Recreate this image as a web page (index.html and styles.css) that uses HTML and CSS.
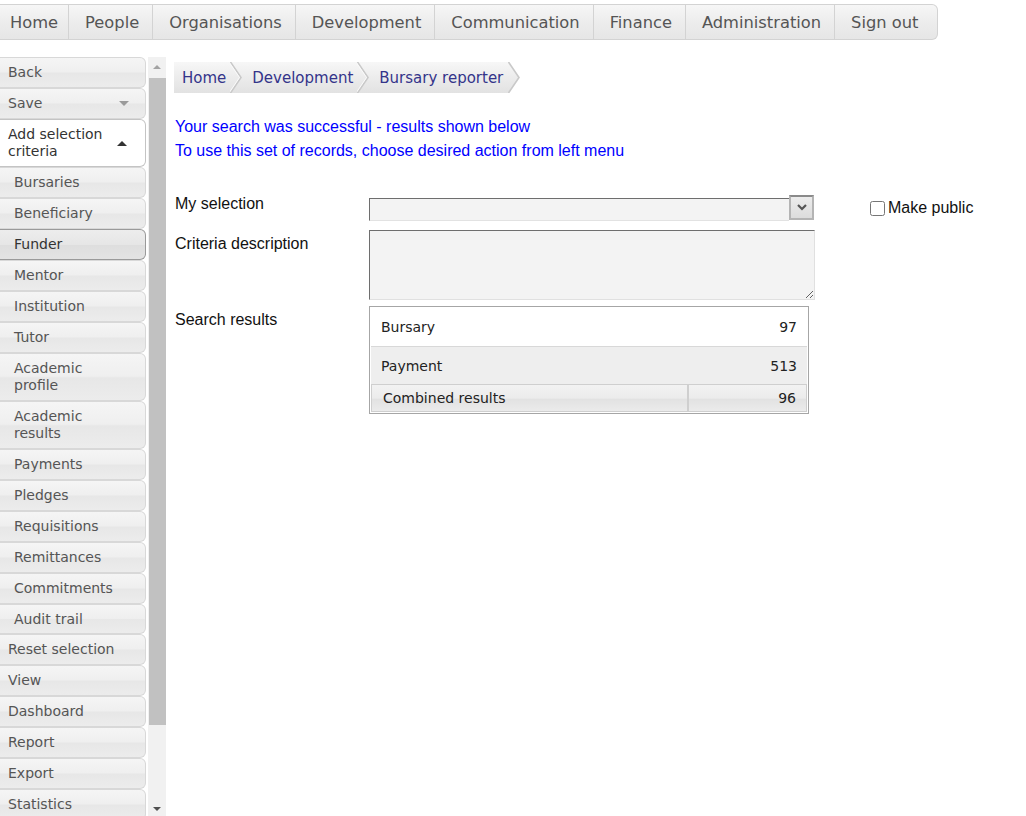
FILE: index.html
```html
<!DOCTYPE html>
<html lang="en">
<head>
<meta charset="utf-8">
<title>Bursary reporter</title>
<link rel="stylesheet" href="styles.css">
</head>
<body>
<nav class="topnav">
  <a class="topnav-item first">Home</a>
  <a class="topnav-item">People</a>
  <a class="topnav-item">Organisations</a>
  <a class="topnav-item">Development</a>
  <a class="topnav-item">Communication</a>
  <a class="topnav-item">Finance</a>
  <a class="topnav-item">Administration</a>
  <a class="topnav-item last">Sign out</a>
</nav>

<div class="layout">
  <aside class="sidebar">
    <ul class="menu">
      <li class="menu-item">Back</li>
      <li class="menu-item has-caret">Save <span class="caret down"></span></li>
      <li class="menu-item open has-caret two-line">Add selection criteria <span class="caret up"></span></li>
      <li class="menu-item sub">Bursaries</li>
      <li class="menu-item sub">Beneficiary</li>
      <li class="menu-item sub active">Funder</li>
      <li class="menu-item sub">Mentor</li>
      <li class="menu-item sub">Institution</li>
      <li class="menu-item sub">Tutor</li>
      <li class="menu-item sub two-line">Academic profile</li>
      <li class="menu-item sub two-line">Academic results</li>
      <li class="menu-item sub">Payments</li>
      <li class="menu-item sub">Pledges</li>
      <li class="menu-item sub">Requisitions</li>
      <li class="menu-item sub">Remittances</li>
      <li class="menu-item sub">Commitments</li>
      <li class="menu-item sub short">Audit trail</li>
      <li class="menu-item">Reset selection</li>
      <li class="menu-item">View</li>
      <li class="menu-item">Dashboard</li>
      <li class="menu-item">Report</li>
      <li class="menu-item">Export</li>
      <li class="menu-item">Statistics</li>
    </ul>
    <div class="scrollbar">
      <span class="sb-arrow up"></span>
      <div class="sb-thumb"></div>
      <span class="sb-arrow down"></span>
    </div>
  </aside>

  <main class="content">
    <div class="breadcrumb">
      <span class="crumb first">Home</span>
      <svg class="sep" width="12" height="31" viewBox="0 0 12 31"><polyline points="0.5,0 11,15.5 0.5,31" fill="none" stroke="#c9c9c9" stroke-width="1.6"/><polyline points="-1,0 9.5,15.5 -1,31" fill="none" stroke="#fafafa" stroke-width="1"/></svg>
      <span class="crumb">Development</span>
      <svg class="sep" width="12" height="31" viewBox="0 0 12 31"><polyline points="0.5,0 11,15.5 0.5,31" fill="none" stroke="#c9c9c9" stroke-width="1.6"/><polyline points="-1,0 9.5,15.5 -1,31" fill="none" stroke="#fafafa" stroke-width="1"/></svg>
      <span class="crumb">Bursary reporter</span>
      <svg class="sep end" width="14" height="31" viewBox="0 0 14 31"><polygon points="0,0 14,0 14,31 0,31 11,15.5" fill="#ffffff"/><polyline points="0.5,0 11,15.5 0.5,31" fill="none" stroke="#c9c9c9" stroke-width="1.6"/></svg>
    </div>

    <div class="messages">
      <p>Your search was successful - results shown below</p>
      <p>To use this set of records, choose desired action from left menu</p>
    </div>

    <div class="form">
      <label class="form-label">My selection</label>
      <div class="select">
        <div class="select-field"></div>
        <div class="select-button"><svg width="10" height="7" viewBox="0 0 10 7"><polyline points="1,1 5,5 9,1" fill="none" stroke="#555" stroke-width="2.2"/></svg></div>
      </div>
      <label class="public"><input type="checkbox" class="checkbox"> Make public</label>

      <label class="form-label criteria-label">Criteria description</label>
      <textarea class="textarea"></textarea>
      <div></div>

      <label class="form-label results-label">Search results</label>
      <table class="results">
        <tr class="row-white"><td>Bursary</td><td class="num">97</td></tr>
        <tr class="row-grey"><td>Payment</td><td class="num">513</td></tr>
        <tr class="row-total"><td class="total-label">Combined results</td><td class="num total-num">96</td></tr>
      </table>
      <div></div>
    </div>
  </main>
</div>
</body>
</html>
```

FILE: styles.css
```css
html, body {
  margin: 0;
  padding: 0;
  background: #ffffff;
  overflow: hidden;
  height: 816px;
}

body {
  font-family: "DejaVu Sans", Verdana, sans-serif;
  color: #555;
}

/* ---------- top navigation ---------- */
.topnav {
  display: flex;
  margin-top: 4px;
  width: 937px;
  height: 34px;
  border: 1px solid #d3d3d3;
  border-left: none;
  border-radius: 0 6px 6px 0;
  background: linear-gradient(#f6f6f6, #ececec 55%, #e6e6e6);
  overflow: hidden;
}

.topnav-item {
  display: flex;
  align-items: center;
  padding: 0 13px 0 16px;
  font-size: 16.3px;
  color: #555;
  border-right: 1px solid #d3d3d3;
  white-space: nowrap;
}

.topnav-item.first {
  padding-left: 10px;
  padding-right: 10px;
}

.topnav-item.last {
  border-right: none;
}

/* ---------- layout ---------- */
.layout {
  display: flex;
  margin-top: 17px;
}

.sidebar {
  display: flex;
  gap: 2px;
  width: 166px;
  height: 759px;
  overflow: hidden;
  flex-shrink: 0;
}

.menu {
  list-style: none;
  margin: 0;
  padding: 0;
  width: 146px;
  flex-shrink: 0;
}

.menu-item {
  box-sizing: border-box;
  height: 31px;
  padding: 0 8px;
  display: flex;
  align-items: center;
  font-size: 14px;
  line-height: 17px;
  color: #555;
  border: 1px solid #d8d8d8;
  border-left: none;
  border-radius: 0 6px 6px 0;
  background: linear-gradient(#f5f5f5, #efefef 48%, #e7e7e7 52%, #ececec);
}

.menu-item.sub {
  padding-left: 14px;
}

.menu-item.short {
  height: 30px;
}

.menu-item.two-line {
  height: 48px;
  padding-right: 40px;
}

.menu-item.open {
  background: #ffffff;
  border-color: #c4c4c4;
  color: #333;
}

.menu-item.active {
  border-color: #9a9a9a;
  color: #333;
  background: linear-gradient(#ededed, #e6e6e6 50%, #dedede 52%, #e3e3e3);
}

.menu-item.has-caret {
  justify-content: space-between;
  padding-right: 15px;
}

.caret {
  width: 0;
  height: 0;
  border-left: 5px solid transparent;
  border-right: 5px solid transparent;
}

.caret.down {
  border-top: 5px solid #9a9a9a;
  margin-right: 1px;
}

.caret.up {
  border-bottom: 5px solid #333;
  margin-right: 3px;
}

/* fake scrollbar */
.scrollbar {
  width: 18px;
  height: 759px;
  background: #f1f1f1;
  display: flex;
  flex-direction: column;
  align-items: center;
}

.sb-arrow {
  width: 0;
  height: 0;
  border-left: 4px solid transparent;
  border-right: 4px solid transparent;
}

.sb-arrow.up {
  margin-top: 8px;
  margin-bottom: 9px;
  border-bottom: 4px solid #a3a3a3;
}

.sb-arrow.down {
  margin-top: auto;
  margin-bottom: 5px;
  border-top: 4px solid #505050;
}

.sb-thumb {
  width: 17px;
  margin-left: 1px;
  height: 647px;
  background: #c1c1c1;
}

/* ---------- content ---------- */
.content {
  margin-left: 8px;
  padding-top: 5px;
  flex: 1;
}

.breadcrumb {
  display: inline-flex;
  height: 31px;
  align-items: stretch;
  background: linear-gradient(#f7f7f7, #ececec 50%, #e2e2e2);
}

.crumb {
  display: flex;
  align-items: center;
  font-size: 15px;
  color: #34348a;
  padding: 0 4px 0 10px;
}

.crumb.first {
  padding-left: 8px;
}

.sep {
  display: block;
  flex-shrink: 0;
}

.sep.end {
  margin-left: 1px;
}

.messages {
  margin-top: 22px;
  font-family: "Liberation Sans", Arial, sans-serif;
  font-size: 16px;
  line-height: 24px;
  color: #0000ff;
}

.messages p {
  margin: 0;
  padding-left: 1px;
}

.form {
  display: grid;
  grid-template-columns: 195px 445px auto;
  margin-top: 32px;
  font-family: "Liberation Sans", Arial, sans-serif;
  font-size: 16px;
  color: #111;
}

.form-label {
  padding-left: 1px;
  line-height: 18px;
}

.criteria-label {
  margin-top: 14px;
}

.results-label {
  margin-top: 11px;
}

.select {
  display: flex;
  align-items: flex-start;
  height: 26px;
}

.select-field {
  box-sizing: border-box;
  margin-top: 3px;
  width: 420px;
  height: 23px;
  background: #f3f3f3;
  border-top: 1px solid #6e6e6e;
  border-left: 1px solid #6e6e6e;
  border-bottom: 1px solid #e2e2e2;
}

.select-button {
  box-sizing: border-box;
  width: 25px;
  height: 25px;
  border: 2px solid #b4b4b4;
  border-top-color: #8a8a8a;
  background: linear-gradient(#ececec, #dcdcdc);
  display: flex;
  align-items: center;
  justify-content: center;
}

.public {
  display: flex;
  align-items: center;
  margin-left: 56px;
  height: 26px;
  color: #111;
}

.checkbox {
  margin: 0 3px 0 0;
  width: 15px;
  height: 15px;
}

.textarea {
  box-sizing: border-box;
  display: block;
  width: 446px;
  height: 70px;
  margin: 9px 0 0 0;
  background: #f3f3f3;
  border: 1px solid #e0e0e0;
  border-top-color: #6e6e6e;
  border-left-color: #6e6e6e;
  font-family: inherit;
}

.results {
  margin-top: 6px;
  width: 440px;
  border-collapse: separate;
  border-spacing: 0;
  border: 1px solid #a6a6a6;
  padding: 1px;
  font-family: "DejaVu Sans", Verdana, sans-serif;
  font-size: 14px;
  color: #222;
}

.results td {
  padding: 0 10px;
}

.results .num {
  text-align: right;
}

.row-white td {
  height: 38px;
  background: #ffffff;
  border-bottom: 1px solid #d8d8d8;
}

.row-grey td {
  height: 37px;
  background: #eeeeee;
}

.row-total td {
  height: 26px;
  border: 1px solid #cfcfcf;
  background: linear-gradient(#f2f2f2, #ececec 50%, #e2e2e2 55%, #ebebeb);
}

.results .total-label {
  width: 294px;
  padding-left: 11px;
}
```
